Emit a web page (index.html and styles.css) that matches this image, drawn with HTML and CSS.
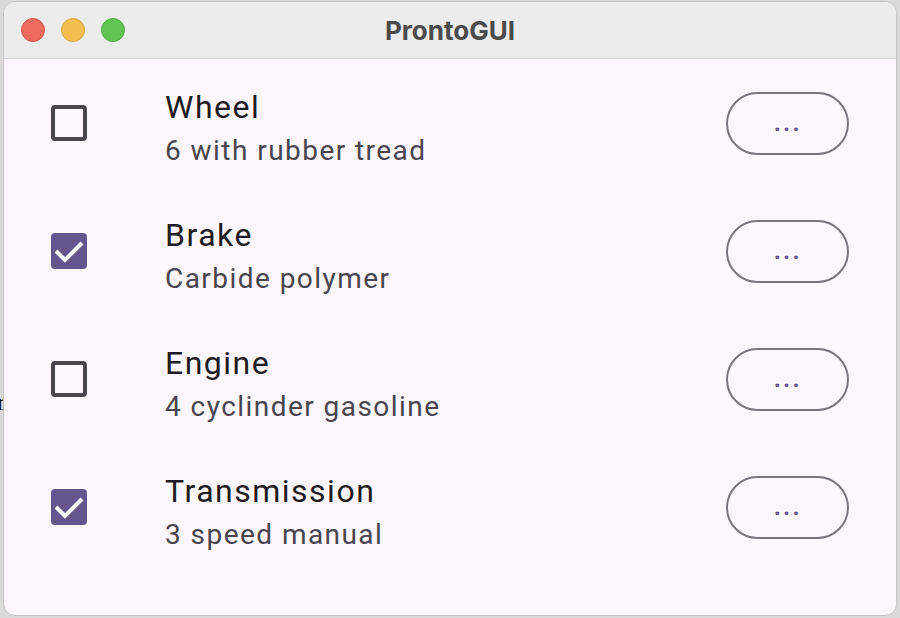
FILE: index.html
```html
<!DOCTYPE html>
<html>
<head>
<meta charset="utf-8">
<link rel="stylesheet" href="styles.css">
</head>
<body>
<span class="desk-glyph">r</span>
<div class="window">
  <div class="titlebar">
    <div class="lights">
      <span class="light red"></span>
      <span class="light yellow"></span>
      <span class="light green"></span>
    </div>
    <div class="title">ProntoGUI</div>
  </div>
  <div class="content">
    <div class="row">
      <span class="checkbox"></span>
      <div class="texts">
        <div class="headline">Wheel</div>
        <div class="supporting">6 with rubber tread</div>
      </div>
      <button class="more">...</button>
    </div>
    <div class="row">
      <span class="checkbox checked"><svg viewBox="0 0 36 36" width="36" height="36"><path d="M5 18 L14 27 L31 10" fill="none" stroke="#fff" stroke-width="4"/></svg></span>
      <div class="texts">
        <div class="headline">Brake</div>
        <div class="supporting">Carbide polymer</div>
      </div>
      <button class="more">...</button>
    </div>
    <div class="row">
      <span class="checkbox"></span>
      <div class="texts">
        <div class="headline">Engine</div>
        <div class="supporting">4 cyclinder gasoline</div>
      </div>
      <button class="more">...</button>
    </div>
    <div class="row">
      <span class="checkbox checked"><svg viewBox="0 0 36 36" width="36" height="36"><path d="M5 18 L14 27 L31 10" fill="none" stroke="#fff" stroke-width="4"/></svg></span>
      <div class="texts">
        <div class="headline">Transmission</div>
        <div class="supporting">3 speed manual</div>
      </div>
      <button class="more">...</button>
    </div>
  </div>
</div>
</body>
</html>
```

FILE: styles.css
```css
html, body {
  margin: 0;
  padding: 0;
}
body {
  width: 900px;
  height: 618px;
  background: #dadada;
  overflow: hidden;
  position: relative;
  font-family: Roboto, "Noto Sans", sans-serif;
}
.desk-glyph {
  position: absolute;
  left: -3px;
  top: 389px;
  font-family: "Liberation Serif", serif;
  font-size: 24px;
  color: #000;
}
.window {
  position: relative;
  margin: 1px 3px 0 3px;
  width: 892px;
  height: 613px;
  border: 1px solid #c2c2c2;
  border-radius: 12px;
  overflow: hidden;
  background: #fdf7fd;
  display: flex;
  flex-direction: column;
}
.titlebar {
  height: 56px;
  flex: none;
  background: #ececec;
  border-bottom: 1px solid #d4d4d4;
  display: flex;
  align-items: center;
  position: relative;
}
.lights {
  display: flex;
  gap: 16px;
  padding-left: 17px;
}
.light {
  width: 24px;
  height: 24px;
  border-radius: 50%;
  box-sizing: border-box;
}
.red { background: #ed6a5e; border: 1px solid #d5574b; }
.yellow { background: #f5bf4f; border: 1px solid #d9a43a; }
.green { background: #61c554; border: 1px solid #4eab42; }
.title {
  position: absolute;
  left: 0;
  right: 0;
  text-align: center;
  font-family: Inter, "Open Sans", sans-serif;
  font-weight: 700;
  font-size: 26px;
  color: #4b4b4b;
  top: 14px;
  line-height: 30px;
}
.content {
  display: flex;
  flex-direction: column;
}
.row {
  height: 128px;
  display: flex;
  align-items: center;
  padding: 0 47px 0 47px;
}
.checkbox {
  width: 36px;
  height: 36px;
  box-sizing: border-box;
  border: 4px solid #49454f;
  border-radius: 4px;
  flex: none;
  display: block;
}
.checkbox.checked {
  border: none;
  background: #65558f;
  border-radius: 4px;
}
.checkbox svg { display: block; }
.texts {
  flex: 1;
  margin-left: 78px;
  padding-top: 8px;
}
.headline {
  font-size: 32px;
  line-height: 48px;
  letter-spacing: 1.5px;
  color: #1d1b20;
}
.supporting {
  font-size: 28px;
  line-height: 40px;
  letter-spacing: 1.45px;
  color: #49454f;
}
.more {
  width: 123px;
  height: 63px;
  box-sizing: border-box;
  border: 2px solid #79747e;
  border-radius: 32px;
  background: transparent;
  color: #65558f;
  font-family: Roboto, sans-serif;
  font-size: 28px;
  font-weight: 500;
  letter-spacing: 1.5px;
  padding: 0 0 4px 0;
  flex: none;
}
```
